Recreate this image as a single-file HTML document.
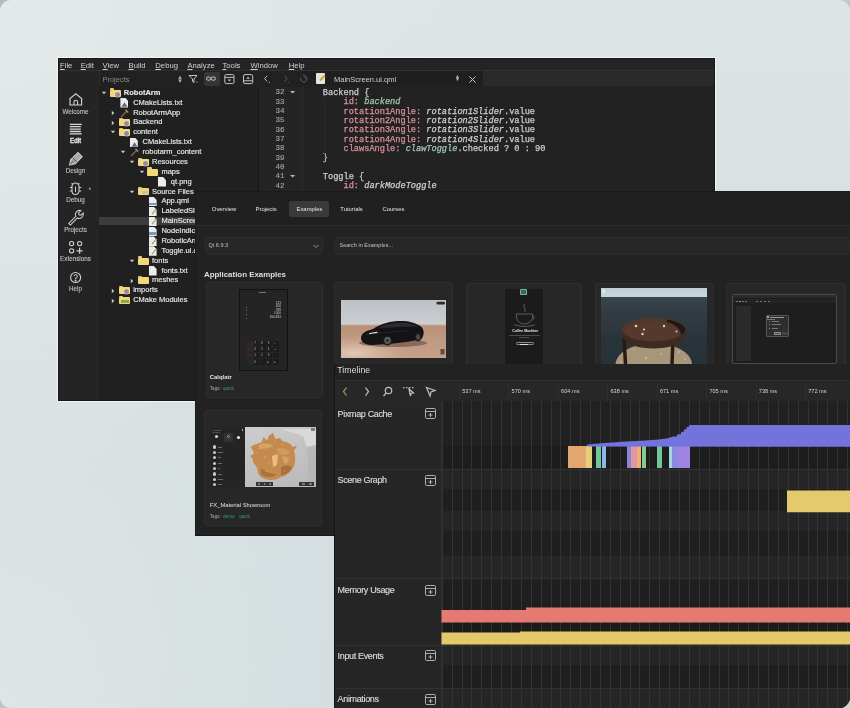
<!DOCTYPE html><html><head><meta charset="utf-8"><style>
*{margin:0;padding:0;box-sizing:border-box}
html,body{width:850px;height:708px;overflow:hidden}
body{position:relative;background:linear-gradient(135deg,#b3bbbb 0%,#bfc6c6 50%,#cdd4d4 100%);font-family:"Liberation Sans",sans-serif}
.abs{position:absolute}
.t{position:absolute;white-space:pre;line-height:1}
#card{filter:blur(0.3px);position:absolute;left:0;top:0;width:850px;height:708px;border-radius:11px;background:radial-gradient(ellipse 60% 70% at 0% 0%,rgba(228,234,234,0.9),rgba(228,234,234,0) 100%),radial-gradient(ellipse 40% 60% at 0% 100%,rgba(226,232,232,0.7),rgba(226,232,232,0) 100%),linear-gradient(180deg,#dce4e5 0%,#d6dfe1 60%,#d4dee0 100%);overflow:hidden}
</style></head><body>
<div id="card">

<div class="abs" style="left:57px;top:57px;width:659px;height:345px;background:#f2f5f5"></div>
<div class="abs" id="w1" style="left:58px;top:58px;width:657px;height:343px;background:#242424;overflow:hidden;border:1px solid #161616">
<div class="t" style="left:1.0px;top:3.0px;font-size:7.7px;color:#d0d0d0"><u style="text-decoration-thickness:0.5px;text-underline-offset:1px">F</u>ile</div>
<div class="t" style="left:21.7px;top:3.0px;font-size:7.7px;color:#d0d0d0"><u style="text-decoration-thickness:0.5px;text-underline-offset:1px">E</u>dit</div>
<div class="t" style="left:43.6px;top:3.0px;font-size:7.7px;color:#d0d0d0"><u style="text-decoration-thickness:0.5px;text-underline-offset:1px">V</u>iew</div>
<div class="t" style="left:69.5px;top:3.0px;font-size:7.7px;color:#d0d0d0"><u style="text-decoration-thickness:0.5px;text-underline-offset:1px">B</u>uild</div>
<div class="t" style="left:96.3px;top:3.0px;font-size:7.7px;color:#d0d0d0"><u style="text-decoration-thickness:0.5px;text-underline-offset:1px">D</u>ebug</div>
<div class="t" style="left:128.4px;top:3.0px;font-size:7.7px;color:#d0d0d0"><u style="text-decoration-thickness:0.5px;text-underline-offset:1px">A</u>nalyze</div>
<div class="t" style="left:163.5px;top:3.0px;font-size:7.7px;color:#d0d0d0"><u style="text-decoration-thickness:0.5px;text-underline-offset:1px">T</u>ools</div>
<div class="t" style="left:191.5px;top:3.0px;font-size:7.7px;color:#d0d0d0"><u style="text-decoration-thickness:0.5px;text-underline-offset:1px">W</u>indow</div>
<div class="t" style="left:229.7px;top:3.0px;font-size:7.7px;color:#d0d0d0"><u style="text-decoration-thickness:0.5px;text-underline-offset:1px">H</u>elp</div>
<div class="abs" style="left:0;top:11.0px;width:657px;height:1px;background:#323232"></div>
<div class="abs" style="left:40px;top:12px;width:616px;height:16px;background:#212121"></div>
<div class="abs" style="left:0;top:12px;width:40px;height:16px;background:#242424"></div>
<div class="abs" style="left:40px;top:27.5px;width:616px;height:1px;background:#333"></div>
<div class="abs" style="left:39.5px;top:12px;width:1px;height:340px;background:#2c2c2c"></div>
<div class="abs" style="left:40px;top:28px;width:159px;height:320px;background:#202020"></div>
<div class="abs" style="left:199px;top:28px;width:44px;height:320px;background:#242424"></div>
<div class="abs" style="left:242.5px;top:28px;width:1px;height:320px;background:#2c2c2c"></div>
<div class="abs" style="left:199px;top:28px;width:1px;height:340px;background:#161616"></div>
<div class="abs" style="left:244px;top:28px;width:412px;height:320px;background:#222222"></div>
<div class="abs" style="left:424px;top:12px;width:232px;height:15px;background:#2a2a2a"></div>
<div class="abs" style="left:244px;top:12px;width:180px;height:15px;background:#1f1f1f"></div>
<div class="t" style="left:43.400000000000006px;top:16.5px;font-size:7.5px;color:#8a8a8a">Projects</div>
<div class="t" style="left:118px;top:15.5px;font-size:6px;color:#aaa;line-height:0.7">&#9650;<br>&#9660;</div>
<div class="abs" style="left:145px;top:13px;width:16px;height:14px;background:#353535;border-radius:2px"></div>
<svg class="abs" style="left:127px;top:12px" width="160" height="16" viewBox="0 0 160 16">
<g fill="none" stroke="#c4c4c4" stroke-width="1">
<path d="M3 4.5 H11 L8 8 V11.5 L6.5 10.5 V8 Z"/><circle cx="11" cy="11" r="0.6" fill="#c4c4c4" stroke="none"/>
<rect x="20.5" y="6" width="4.2" height="3.2" rx="1.6"/><rect x="25.3" y="6" width="4.2" height="3.2" rx="1.6"/>
<rect x="38.8" y="3.6" width="9.2" height="9" rx="1.5"/><path d="M38.8 6.4 H48"/><path d="M41.6 8.6 H45.2 L43.4 10.6 Z" fill="#c4c4c4" stroke="none"/>
<rect x="57.5" y="3.6" width="9.2" height="9" rx="1.5"/><path d="M57.5 9.8 H66.7"/><path d="M60.3 7.8 H63.9 L62.1 5.8 Z" fill="#c4c4c4" stroke="none"/>
<path d="M81.2 4.8 L78.6 7.6 L81.2 10.4"/><circle cx="83.3" cy="11.3" r="0.6" fill="#c4c4c4" stroke="none"/>
</g>
<g fill="none" stroke="#5c5c5c" stroke-width="1"><path d="M98.5 4.8 L101.1 7.6 L98.5 10.4"/><circle cx="102.8" cy="11.3" r="0.6" fill="#5c5c5c" stroke="none"/><path d="M119.5 5.2 A3.2 3.2 0 1 1 115 6.5"/><path d="M117 4 L119.7 5 L118.8 7.6"/></g>
</svg>
<div class="abs" style="left:257px;top:14px;width:9px;height:11px;background:#e8e4da;border-radius:1px"></div>
<div class="abs" style="left:260px;top:18px;width:7px;height:2px;background:#c8a040;transform:rotate(-45deg)"></div>
<div class="t" style="left:275px;top:17.299999999999997px;font-size:7.5px;color:#cfcfcf">MainScreen.ui.qml</div>
<div class="t" style="left:396px;top:15.5px;font-size:5px;color:#bbb;line-height:0.75">&#9650;<br>&#9660;</div>
<svg class="abs" style="left:409px;top:15.5px" width="9" height="9"><path d="M1.5 1.5 L7.5 7.5 M7.5 1.5 L1.5 7.5" stroke="#c8c8c8" stroke-width="1"/></svg>
<div class="t" style="left:-3.5px;width:40px;text-align:center;top:49.5px;font-size:6.3px;color:#c2c2c2;-webkit-text-stroke:0.1px">Welcome</div>
<div class="t" style="left:-3.5px;width:40px;text-align:center;top:79.0px;font-size:6.3px;color:#f0f0f0;-webkit-text-stroke:0.3px">Edit</div>
<div class="t" style="left:-3.5px;width:40px;text-align:center;top:108.8px;font-size:6.3px;color:#c2c2c2;-webkit-text-stroke:0.1px">Design</div>
<div class="t" style="left:-3.5px;width:40px;text-align:center;top:138.2px;font-size:6.3px;color:#c2c2c2;-webkit-text-stroke:0.1px">Debug</div>
<div class="t" style="left:-3.5px;width:40px;text-align:center;top:167.5px;font-size:6.3px;color:#c2c2c2;-webkit-text-stroke:0.1px">Projects</div>
<div class="t" style="left:-3.5px;width:40px;text-align:center;top:197.2px;font-size:6.3px;color:#c2c2c2;-webkit-text-stroke:0.1px">Extensions</div>
<div class="t" style="left:-3.5px;width:40px;text-align:center;top:226.8px;font-size:6.3px;color:#c2c2c2;-webkit-text-stroke:0.1px">Help</div>
<svg class="abs" style="left:0;top:0" width="40" height="300" viewBox="59 59 40 300"><g fill="none" stroke="#cfcfcf" stroke-width="1.1"><path d="M70 105 V98.5 L75.8 93.8 L81.6 98.5 V105 Z" stroke-width="1.2"/><path d="M74 105 V102 A1.8 1.8 0 0 1 77.6 102 V105" stroke-width="1.1"/><path d="M69.8 124.3 H81.8" stroke-width="1.3" stroke="#d8d8d8"/><path d="M69.8 126.7 H80.8" stroke-width="1.3" stroke="#d8d8d8"/><path d="M69.8 129.1 H80.8" stroke-width="1.3" stroke="#d8d8d8"/><path d="M69.8 131.5 H80.8" stroke-width="1.3" stroke="#d8d8d8"/><path d="M69.8 133.9 H81.8" stroke-width="1.3" stroke="#d8d8d8"/><path d="M69.5 165 L70.8 159.5 L78 152.5 L82.2 156.7 L75.2 163.7 Z" fill="#a8a8a8" stroke="#c8c8c8"/><path d="M70 164.5 L74 160.5 M72.5 157.5 L77.5 162.5" stroke="#444" stroke-width="0.8"/><path d="M72 186 A3.5 3 0 0 1 79 186 V191 A3.5 3.5 0 0 1 72 191 Z" stroke-width="1.1"/><path d="M73 184.5 L71.5 183 M78 184.5 L79.5 183 M69.8 187.5 H72 M79 187.5 H81.2 M69.8 191 H72 M79 191 H81.2 M75.5 186.5 V192" stroke-width="1"/><path d="M89.2 187.2 L91.2 188.7 L89.2 190.2 Z" fill="#b0b0b0" stroke="none"/><path d="M69.7 224.3 L68.8 223.4 L75.8 216.4 A4.2 4.2 0 0 1 80.8 210.6 L78.6 212.8 L79 214.8 L81 215.2 L83.2 213 A4.2 4.2 0 0 1 77.4 218 L70.4 225 Z" stroke-width="1.05"/><circle cx="71.6" cy="243.6" r="2.1"/><circle cx="79.6" cy="243.6" r="2.1"/><circle cx="71.6" cy="250.8" r="2.1"/><path d="M79.6 247.8 V253.8 M76.6 250.8 H82.6" stroke-width="1.2"/><circle cx="75.6" cy="277.5" r="5"/><path d="M74 276.2 A1.7 1.7 0 1 1 75.6 278 V279" stroke-width="1"/><circle cx="75.6" cy="280.6" r="0.5" fill="#cfcfcf"/></g></svg>
<div class="abs" style="left:40px;top:157.6px;width:97px;height:8.2px;background:#3c3c3c"></div>
<svg class="abs" style="left:42.0px;top:31.8px" width="6" height="4"><path d="M0.8 0.8 H5.2 L3 3.3 Z" fill="#c8c8c8"/></svg>
<div class="abs" style="left:50.5px;top:30.6px;width:11px;height:7px;background:#f2d67a;border-radius:1px"></div>
<div class="abs" style="left:50.5px;top:29.3px;width:4.5px;height:1.6px;background:#e6c66a;border-radius:1px 1px 0 0"></div>
<div class="abs" style="left:55.5px;top:32.6px;width:5px;height:5px;background:#9a8aa0;border-radius:50%;box-shadow:0 0 0 0.6px #fff8"></div>
<div class="t" style="left:64.8px;top:29.7px;font-size:7.5px;font-weight:bold;color:#e8e8e8;-webkit-text-stroke:0.15px">RobotArm</div>
<div class="abs" style="left:61.4px;top:39.1px;width:8px;height:9.5px;background:#ececec;clip-path:polygon(0 0,65% 0,100% 32%,100% 100%,0 100%)"></div>
<svg class="abs" style="left:62.400000000000006px;top:43.2px" width="7" height="5"><path d="M0.5 4.8 L3.5 0.3 L6.5 4.8 Z" fill="#6a6a7a"/></svg>
<div class="t" style="left:74.2px;top:39.6px;font-size:7.5px;font-weight:normal;color:#e8e8e8;-webkit-text-stroke:0.15px">CMakeLists.txt</div>
<svg class="abs" style="left:52.400000000000006px;top:51.1px" width="4" height="6"><path d="M0.8 0.8 V5.2 L3.3 3 Z" fill="#c8c8c8"/></svg>
<svg class="abs" style="left:61.400000000000006px;top:48.6px" width="10" height="10"><path d="M1 9 L7 3" stroke="#8a6a58" stroke-width="1.1"/><path d="M5.5 1.8 L8.2 4.5" stroke="#b08a70" stroke-width="1.4"/></svg>
<div class="t" style="left:74.2px;top:49.5px;font-size:7.5px;font-weight:normal;color:#e8e8e8;-webkit-text-stroke:0.15px">RobotArmApp</div>
<svg class="abs" style="left:52.400000000000006px;top:60.9px" width="4" height="6"><path d="M0.8 0.8 V5.2 L3.3 3 Z" fill="#c8c8c8"/></svg>
<div class="abs" style="left:59.9px;top:60.2px;width:11px;height:7px;background:#f2d67a;border-radius:1px"></div>
<div class="abs" style="left:59.9px;top:58.9px;width:4.5px;height:1.6px;background:#e6c66a;border-radius:1px 1px 0 0"></div>
<div class="abs" style="left:64.9px;top:62.2px;width:5px;height:5px;background:#9a8aa0;border-radius:50%;box-shadow:0 0 0 0.6px #fff8"></div>
<div class="t" style="left:74.2px;top:59.3px;font-size:7.5px;font-weight:normal;color:#e8e8e8;-webkit-text-stroke:0.15px">Backend</div>
<svg class="abs" style="left:51.400000000000006px;top:71.3px" width="6" height="4"><path d="M0.8 0.8 H5.2 L3 3.3 Z" fill="#c8c8c8"/></svg>
<div class="abs" style="left:59.9px;top:70.1px;width:11px;height:7px;background:#f2d67a;border-radius:1px"></div>
<div class="abs" style="left:59.9px;top:68.8px;width:4.5px;height:1.6px;background:#e6c66a;border-radius:1px 1px 0 0"></div>
<div class="abs" style="left:64.9px;top:72.1px;width:5px;height:5px;background:#9a8aa0;border-radius:50%;box-shadow:0 0 0 0.6px #fff8"></div>
<div class="t" style="left:74.2px;top:69.2px;font-size:7.5px;font-weight:normal;color:#e8e8e8;-webkit-text-stroke:0.15px">content</div>
<div class="abs" style="left:70.8px;top:78.6px;width:8px;height:9.5px;background:#ececec;clip-path:polygon(0 0,65% 0,100% 32%,100% 100%,0 100%)"></div>
<svg class="abs" style="left:71.80000000000001px;top:82.7px" width="7" height="5"><path d="M0.5 4.8 L3.5 0.3 L6.5 4.8 Z" fill="#6a6a7a"/></svg>
<div class="t" style="left:83.6px;top:79.1px;font-size:7.5px;font-weight:normal;color:#e8e8e8;-webkit-text-stroke:0.15px">CMakeLists.txt</div>
<svg class="abs" style="left:60.80000000000001px;top:91.1px" width="6" height="4"><path d="M0.8 0.8 H5.2 L3 3.3 Z" fill="#c8c8c8"/></svg>
<svg class="abs" style="left:70.80000000000001px;top:88.1px" width="10" height="10"><path d="M1 9 L7 3" stroke="#8a6a58" stroke-width="1.1"/><path d="M5.5 1.8 L8.2 4.5" stroke="#b08a70" stroke-width="1.4"/></svg>
<div class="t" style="left:83.6px;top:89.0px;font-size:7.5px;font-weight:normal;color:#e8e8e8;-webkit-text-stroke:0.15px">robotarm_content</div>
<svg class="abs" style="left:70.19999999999999px;top:101.0px" width="6" height="4"><path d="M0.8 0.8 H5.2 L3 3.3 Z" fill="#c8c8c8"/></svg>
<div class="abs" style="left:78.7px;top:99.8px;width:11px;height:7px;background:#f2d67a;border-radius:1px"></div>
<div class="abs" style="left:78.7px;top:98.5px;width:4.5px;height:1.6px;background:#e6c66a;border-radius:1px 1px 0 0"></div>
<div class="abs" style="left:83.69999999999999px;top:101.8px;width:5px;height:5px;background:#9a8aa0;border-radius:50%;box-shadow:0 0 0 0.6px #fff8"></div>
<div class="t" style="left:93.0px;top:98.9px;font-size:7.5px;font-weight:normal;color:#e8e8e8;-webkit-text-stroke:0.15px">Resources</div>
<svg class="abs" style="left:79.6px;top:110.8px" width="6" height="4"><path d="M0.8 0.8 H5.2 L3 3.3 Z" fill="#c8c8c8"/></svg>
<div class="abs" style="left:88.1px;top:109.6px;width:11px;height:7px;background:#f2d67a;border-radius:1px"></div>
<div class="abs" style="left:88.1px;top:108.3px;width:4.5px;height:1.6px;background:#e6c66a;border-radius:1px 1px 0 0"></div>
<div class="t" style="left:102.4px;top:108.7px;font-size:7.5px;font-weight:normal;color:#e8e8e8;-webkit-text-stroke:0.15px">maps</div>
<div class="abs" style="left:99.0px;top:118.1px;width:8px;height:9.5px;background:#ececec;clip-path:polygon(0 0,65% 0,100% 32%,100% 100%,0 100%)"></div>
<div class="t" style="left:111.8px;top:118.6px;font-size:7.5px;font-weight:normal;color:#e8e8e8;-webkit-text-stroke:0.15px">qt.png</div>
<svg class="abs" style="left:70.19999999999999px;top:130.6px" width="6" height="4"><path d="M0.8 0.8 H5.2 L3 3.3 Z" fill="#c8c8c8"/></svg>
<div class="abs" style="left:78.7px;top:129.4px;width:11px;height:7px;background:#f2d67a;border-radius:1px"></div>
<div class="abs" style="left:78.7px;top:128.1px;width:4.5px;height:1.6px;background:#e6c66a;border-radius:1px 1px 0 0"></div>
<div class="abs" style="left:82.69999999999999px;top:132.1px;width:6px;height:3px;background:#c8c0a8"></div>
<div class="t" style="left:93.0px;top:128.5px;font-size:7.5px;font-weight:normal;color:#e8e8e8;-webkit-text-stroke:0.15px">Source Files</div>
<div class="abs" style="left:89.6px;top:137.9px;width:8px;height:9.5px;background:#ececec;clip-path:polygon(0 0,65% 0,100% 32%,100% 100%,0 100%)"></div>
<div class="abs" style="left:90.1px;top:143.5px;width:7px;height:2.5px;background:#7a9ab8"></div>
<div class="t" style="left:102.4px;top:138.4px;font-size:7.5px;font-weight:normal;color:#e8e8e8;-webkit-text-stroke:0.15px">App.qml</div>
<div class="abs" style="left:89.6px;top:147.8px;width:8px;height:9.5px;background:#ececec;clip-path:polygon(0 0,65% 0,100% 32%,100% 100%,0 100%)"></div>
<div class="abs" style="left:91.6px;top:152.4px;width:6.5px;height:1.4px;background:#a89050;transform:rotate(-50deg)"></div>
<div class="t" style="left:102.4px;top:148.3px;font-size:7.5px;font-weight:normal;color:#e8e8e8;-webkit-text-stroke:0.15px">LabeledSlider.qml</div>
<div class="abs" style="left:89.6px;top:157.6px;width:8px;height:9.5px;background:#ececec;clip-path:polygon(0 0,65% 0,100% 32%,100% 100%,0 100%)"></div>
<div class="abs" style="left:91.6px;top:162.2px;width:6.5px;height:1.4px;background:#a89050;transform:rotate(-50deg)"></div>
<div class="t" style="left:102.4px;top:158.1px;font-size:7.5px;font-weight:normal;color:#e8e8e8;-webkit-text-stroke:0.15px">MainScreen.ui.qml</div>
<div class="abs" style="left:89.6px;top:167.5px;width:8px;height:9.5px;background:#ececec;clip-path:polygon(0 0,65% 0,100% 32%,100% 100%,0 100%)"></div>
<div class="abs" style="left:90.1px;top:173.1px;width:7px;height:2.5px;background:#7a9ab8"></div>
<div class="t" style="left:102.4px;top:168.0px;font-size:7.5px;font-weight:normal;color:#e8e8e8;-webkit-text-stroke:0.15px">NodeIndicator.qml</div>
<div class="abs" style="left:89.6px;top:177.4px;width:8px;height:9.5px;background:#ececec;clip-path:polygon(0 0,65% 0,100% 32%,100% 100%,0 100%)"></div>
<div class="abs" style="left:91.6px;top:182.0px;width:6.5px;height:1.4px;background:#a89050;transform:rotate(-50deg)"></div>
<div class="t" style="left:102.4px;top:177.9px;font-size:7.5px;font-weight:normal;color:#e8e8e8;-webkit-text-stroke:0.15px">RoboticArm.qml</div>
<div class="abs" style="left:89.6px;top:187.3px;width:8px;height:9.5px;background:#ececec;clip-path:polygon(0 0,65% 0,100% 32%,100% 100%,0 100%)"></div>
<div class="abs" style="left:91.6px;top:191.9px;width:6.5px;height:1.4px;background:#a89050;transform:rotate(-50deg)"></div>
<div class="t" style="left:102.4px;top:187.8px;font-size:7.5px;font-weight:normal;color:#e8e8e8;-webkit-text-stroke:0.15px">Toggle.ui.qml</div>
<svg class="abs" style="left:70.19999999999999px;top:199.8px" width="6" height="4"><path d="M0.8 0.8 H5.2 L3 3.3 Z" fill="#c8c8c8"/></svg>
<div class="abs" style="left:78.7px;top:198.6px;width:11px;height:7px;background:#f2d67a;border-radius:1px"></div>
<div class="abs" style="left:78.7px;top:197.3px;width:4.5px;height:1.6px;background:#e6c66a;border-radius:1px 1px 0 0"></div>
<div class="t" style="left:93.0px;top:197.7px;font-size:7.5px;font-weight:normal;color:#e8e8e8;-webkit-text-stroke:0.15px">fonts</div>
<div class="abs" style="left:89.6px;top:207.0px;width:8px;height:9.5px;background:#ececec;clip-path:polygon(0 0,65% 0,100% 32%,100% 100%,0 100%)"></div>
<div class="t" style="left:102.4px;top:207.5px;font-size:7.5px;font-weight:normal;color:#e8e8e8;-webkit-text-stroke:0.15px">fonts.txt</div>
<svg class="abs" style="left:71.19999999999999px;top:219.0px" width="4" height="6"><path d="M0.8 0.8 V5.2 L3.3 3 Z" fill="#c8c8c8"/></svg>
<div class="abs" style="left:78.7px;top:218.3px;width:11px;height:7px;background:#f2d67a;border-radius:1px"></div>
<div class="abs" style="left:78.7px;top:217.0px;width:4.5px;height:1.6px;background:#e6c66a;border-radius:1px 1px 0 0"></div>
<div class="t" style="left:93.0px;top:217.4px;font-size:7.5px;font-weight:normal;color:#e8e8e8;-webkit-text-stroke:0.15px">meshes</div>
<svg class="abs" style="left:52.400000000000006px;top:228.9px" width="4" height="6"><path d="M0.8 0.8 V5.2 L3.3 3 Z" fill="#c8c8c8"/></svg>
<div class="abs" style="left:59.9px;top:228.2px;width:11px;height:7px;background:#f2d67a;border-radius:1px"></div>
<div class="abs" style="left:59.9px;top:226.9px;width:4.5px;height:1.6px;background:#e6c66a;border-radius:1px 1px 0 0"></div>
<div class="abs" style="left:64.9px;top:230.2px;width:5px;height:5px;background:#9a8aa0;border-radius:50%;box-shadow:0 0 0 0.6px #fff8"></div>
<div class="t" style="left:74.2px;top:227.3px;font-size:7.5px;font-weight:normal;color:#e8e8e8;-webkit-text-stroke:0.15px">imports</div>
<svg class="abs" style="left:52.400000000000006px;top:238.8px" width="4" height="6"><path d="M0.8 0.8 V5.2 L3.3 3 Z" fill="#c8c8c8"/></svg>
<div class="abs" style="left:59.9px;top:238.1px;width:11px;height:7px;background:#f2d67a;border-radius:1px"></div>
<div class="abs" style="left:59.9px;top:236.8px;width:4.5px;height:1.6px;background:#e6c66a;border-radius:1px 1px 0 0"></div>
<div class="abs" style="left:62.400000000000006px;top:240.8px;width:8px;height:3.5px;background:#8aa850"></div>
<div class="t" style="left:74.2px;top:237.2px;font-size:7.5px;font-weight:normal;color:#e8e8e8;-webkit-text-stroke:0.15px">CMake Modules</div>
<div class="t" style="left:201.5px;width:24px;text-align:right;top:30.1px;font-family:Liberation Mono;font-size:7.6px;color:#a2a2a2;-webkit-text-stroke:0.15px">32</div>
<svg class="abs" style="left:231.2px;top:31.8px" width="6" height="4"><path d="M0 0 H5.2 L2.6 2.4 Z" fill="#b8b8b8"/></svg>
<div class="t" style="left:201.5px;width:24px;text-align:right;top:39.5px;font-family:Liberation Mono;font-size:7.6px;color:#a2a2a2;-webkit-text-stroke:0.15px">33</div>
<div class="t" style="left:201.5px;width:24px;text-align:right;top:48.8px;font-family:Liberation Mono;font-size:7.6px;color:#a2a2a2;-webkit-text-stroke:0.15px">34</div>
<div class="t" style="left:201.5px;width:24px;text-align:right;top:58.2px;font-family:Liberation Mono;font-size:7.6px;color:#a2a2a2;-webkit-text-stroke:0.15px">35</div>
<div class="t" style="left:201.5px;width:24px;text-align:right;top:67.5px;font-family:Liberation Mono;font-size:7.6px;color:#a2a2a2;-webkit-text-stroke:0.15px">36</div>
<div class="t" style="left:201.5px;width:24px;text-align:right;top:76.9px;font-family:Liberation Mono;font-size:7.6px;color:#a2a2a2;-webkit-text-stroke:0.15px">37</div>
<div class="t" style="left:201.5px;width:24px;text-align:right;top:86.3px;font-family:Liberation Mono;font-size:7.6px;color:#a2a2a2;-webkit-text-stroke:0.15px">38</div>
<div class="t" style="left:201.5px;width:24px;text-align:right;top:95.6px;font-family:Liberation Mono;font-size:7.6px;color:#a2a2a2;-webkit-text-stroke:0.15px">39</div>
<div class="t" style="left:201.5px;width:24px;text-align:right;top:105.0px;font-family:Liberation Mono;font-size:7.6px;color:#a2a2a2;-webkit-text-stroke:0.15px">40</div>
<div class="t" style="left:201.5px;width:24px;text-align:right;top:114.3px;font-family:Liberation Mono;font-size:7.6px;color:#a2a2a2;-webkit-text-stroke:0.15px">41</div>
<svg class="abs" style="left:231.2px;top:116.0px" width="6" height="4"><path d="M0 0 H5.2 L2.6 2.4 Z" fill="#b8b8b8"/></svg>
<div class="t" style="left:201.5px;width:24px;text-align:right;top:123.7px;font-family:Liberation Mono;font-size:7.6px;color:#a2a2a2;-webkit-text-stroke:0.15px">42</div>
<div class="t" style="left:263.8px;top:30.1px;font-family:Liberation Mono;font-size:8.65px;-webkit-text-stroke:0.25px"><span style="color:#cdcdcd;">Backend {</span></div>
<div class="t" style="left:263.8px;top:39.4px;font-family:Liberation Mono;font-size:8.65px;-webkit-text-stroke:0.25px"><span style="color:#cdcdcd;">    </span><span style="color:#d98f9a;">id: </span><span style="color:#a3c6b2;font-style:italic">backend</span></div>
<div class="t" style="left:263.8px;top:48.8px;font-family:Liberation Mono;font-size:8.65px;-webkit-text-stroke:0.25px"><span style="color:#cdcdcd;">    </span><span style="color:#d98f9a;">rotation1Angle: </span><span style="color:#d0d0d0;font-style:italic">rotation1Slider</span><span style="color:#cdcdcd;">.value</span></div>
<div class="t" style="left:263.8px;top:58.1px;font-family:Liberation Mono;font-size:8.65px;-webkit-text-stroke:0.25px"><span style="color:#cdcdcd;">    </span><span style="color:#d98f9a;">rotation2Angle: </span><span style="color:#d0d0d0;font-style:italic">rotation2Slider</span><span style="color:#cdcdcd;">.value</span></div>
<div class="t" style="left:263.8px;top:67.4px;font-family:Liberation Mono;font-size:8.65px;-webkit-text-stroke:0.25px"><span style="color:#cdcdcd;">    </span><span style="color:#d98f9a;">rotation3Angle: </span><span style="color:#d0d0d0;font-style:italic">rotation3Slider</span><span style="color:#cdcdcd;">.value</span></div>
<div class="t" style="left:263.8px;top:76.8px;font-family:Liberation Mono;font-size:8.65px;-webkit-text-stroke:0.25px"><span style="color:#cdcdcd;">    </span><span style="color:#d98f9a;">rotation4Angle: </span><span style="color:#d0d0d0;font-style:italic">rotation4Slider</span><span style="color:#cdcdcd;">.value</span></div>
<div class="t" style="left:263.8px;top:86.1px;font-family:Liberation Mono;font-size:8.65px;-webkit-text-stroke:0.25px"><span style="color:#cdcdcd;">    </span><span style="color:#d98f9a;">clawsAngle: </span><span style="color:#a3c6b2;font-style:italic">clawToggle</span><span style="color:#cdcdcd;">.checked ? 0 : 90</span></div>
<div class="t" style="left:263.8px;top:95.4px;font-family:Liberation Mono;font-size:8.65px;-webkit-text-stroke:0.25px"><span style="color:#cdcdcd;">}</span></div>
<div class="t" style="left:263.8px;top:104.7px;font-family:Liberation Mono;font-size:8.65px;-webkit-text-stroke:0.25px"><span style="color:#cdcdcd;"></span></div>
<div class="t" style="left:263.8px;top:114.1px;font-family:Liberation Mono;font-size:8.65px;-webkit-text-stroke:0.25px"><span style="color:#cdcdcd;">Toggle {</span></div>
<div class="t" style="left:263.8px;top:123.4px;font-family:Liberation Mono;font-size:8.65px;-webkit-text-stroke:0.25px"><span style="color:#cdcdcd;">    </span><span style="color:#d98f9a;">id: </span><span style="color:#d0d0d0;font-style:italic">darkModeToggle</span></div>
<div class="abs" style="left:264.5px;top:38px;width:1px;height:58px;background:#2c2c2c"></div>
</div>
<div class="abs" id="w2" style="left:196px;top:192px;width:654px;height:343px;background:#222222;overflow:hidden;box-shadow:-1px 0 0 #1a1c1c, 0 1px 0 #181818, -1px 1px 0 #181818, 0 -1px 0 #1a1a1a">
<div class="abs" style="left:0;top:0;width:655px;height:32.5px;background:#202020"></div>
<div class="abs" style="left:0;top:32.5px;width:655px;height:1px;background:#2f2f2f"></div>
<div class="abs" style="left:93px;top:9px;width:40px;height:16px;background:#3a3a3a;border-radius:2px"></div>
<div class="t" style="left:15.800000000000011px;top:15px;font-size:5.9px;color:#e4e4e4">Overview</div>
<div class="t" style="left:59.5px;top:15px;font-size:5.9px;color:#e4e4e4">Projects</div>
<div class="t" style="left:100.5px;top:15px;font-size:5.9px;color:#e4e4e4">Examples</div>
<div class="t" style="left:144.3px;top:15px;font-size:5.9px;color:#e4e4e4">Tutorials</div>
<div class="t" style="left:186.5px;top:15px;font-size:5.9px;color:#e4e4e4">Courses</div>
<div class="abs" style="left:9px;top:45px;width:118px;height:18px;background:#272727;border:1px solid #2b2b2b;border-radius:3px"></div>
<div class="t" style="left:12.5px;top:51.30000000000001px;font-size:5.5px;color:#c4c4c4">Qt 6.9.3</div>
<svg class="abs" style="left:116.5px;top:52px" width="6" height="5"><path d="M0.5 1 L3 3.5 L5.5 1" fill="none" stroke="#b0b0b0" stroke-width="0.8"/></svg>
<div class="abs" style="left:138px;top:45px;width:516px;height:18px;background:#272727;border:1px solid #2b2b2b;border-radius:3px"></div>
<div class="t" style="left:143.5px;top:51.30000000000001px;font-size:5.5px;color:#c4c4c4">Search in Examples...</div>
<div class="t" style="left:8px;top:79px;font-size:7.9px;font-weight:bold;color:#dedede">Application Examples</div>
<div class="abs" style="left:10px;top:89.5px;width:117.0px;height:116.8px;background:#272727;border:1px solid #2f2f2f;border-radius:3px"></div>
<div class="abs" style="left:137.5px;top:90px;width:119.5px;height:98.0px;background:#272727;border:1px solid #2f2f2f;border-radius:3px"></div>
<div class="abs" style="left:269.6px;top:91px;width:116.4px;height:97.0px;background:#272727;border:1px solid #2f2f2f;border-radius:3px"></div>
<div class="abs" style="left:398.6px;top:91px;width:119.4px;height:97.0px;background:#272727;border:1px solid #2f2f2f;border-radius:3px"></div>
<div class="abs" style="left:529.5px;top:91px;width:120.0px;height:97.0px;background:#272727;border:1px solid #2f2f2f;border-radius:3px"></div>
<div class="abs" style="left:8px;top:217.7px;width:118.0px;height:116.3px;background:#272727;border:1px solid #2f2f2f;border-radius:3px"></div>
<div class="abs" style="left:42.599999999999994px;top:97px;width:49px;height:81.5px;background:#242424;border:1.5px solid #121212"></div>
<div class="abs" style="left:63px;top:100px;width:7px;height:1px;background:#777"></div>
<div class="t" style="left:59px;width:26px;text-align:right;top:109.5px;font-size:3.1px;line-height:3.65px;color:#d0d0d0">123<br>456<br>789<br>1000<br>456,833</div>
<div class="abs" style="left:49.5px;top:114.5px;width:1px;height:1px;background:#777"></div>
<div class="abs" style="left:49.5px;top:118.2px;width:1px;height:1px;background:#777"></div>
<div class="abs" style="left:49.5px;top:121.9px;width:1px;height:1px;background:#777"></div>
<div class="abs" style="left:49.5px;top:125.6px;width:1px;height:1px;background:#777"></div>
<div class="abs" style="left:51.0px;top:148.5px;width:5.6px;height:5.2px;background:#32262a;border-radius:0.5px"></div>
<div class="abs" style="left:57.6px;top:148.5px;width:5.6px;height:5.2px;background:#1c1c1c;border-radius:0.5px"></div>
<div class="abs" style="left:64.2px;top:148.5px;width:5.6px;height:5.2px;background:#1c1c1c;border-radius:0.5px"></div>
<div class="abs" style="left:70.8px;top:148.5px;width:5.6px;height:5.2px;background:#1c1c1c;border-radius:0.5px"></div>
<div class="abs" style="left:77.4px;top:148.5px;width:5.6px;height:5.2px;background:#1c1c1c;border-radius:0.5px"></div>
<div class="abs" style="left:51.0px;top:154.8px;width:5.6px;height:5.2px;background:#32262a;border-radius:0.5px"></div>
<div class="abs" style="left:57.6px;top:154.8px;width:5.6px;height:5.2px;background:#1c1c1c;border-radius:0.5px"></div>
<div class="abs" style="left:64.2px;top:154.8px;width:5.6px;height:5.2px;background:#1c1c1c;border-radius:0.5px"></div>
<div class="abs" style="left:70.8px;top:154.8px;width:5.6px;height:5.2px;background:#1c1c1c;border-radius:0.5px"></div>
<div class="abs" style="left:77.4px;top:154.8px;width:5.6px;height:5.2px;background:#1c1c1c;border-radius:0.5px"></div>
<div class="abs" style="left:51.0px;top:161.1px;width:5.6px;height:5.2px;background:#32262a;border-radius:0.5px"></div>
<div class="abs" style="left:57.6px;top:161.1px;width:5.6px;height:5.2px;background:#1c1c1c;border-radius:0.5px"></div>
<div class="abs" style="left:64.2px;top:161.1px;width:5.6px;height:5.2px;background:#1c1c1c;border-radius:0.5px"></div>
<div class="abs" style="left:70.8px;top:161.1px;width:5.6px;height:5.2px;background:#1c1c1c;border-radius:0.5px"></div>
<div class="abs" style="left:77.4px;top:161.1px;width:5.6px;height:5.2px;background:#1c1c1c;border-radius:0.5px"></div>
<div class="abs" style="left:51.0px;top:167.4px;width:5.6px;height:5.2px;background:#222a28;border-radius:0.5px"></div>
<div class="abs" style="left:57.6px;top:167.4px;width:5.6px;height:5.2px;background:#1c1c1c;border-radius:0.5px"></div>
<div class="abs" style="left:64.2px;top:167.4px;width:5.6px;height:5.2px;background:#1c1c1c;border-radius:0.5px"></div>
<div class="abs" style="left:70.8px;top:167.4px;width:5.6px;height:5.2px;background:#1c1c1c;border-radius:0.5px"></div>
<div class="abs" style="left:77.4px;top:167.4px;width:5.6px;height:5.2px;background:#1c1c1c;border-radius:0.5px"></div>
<div class="t" style="left:58.30000000000001px;top:149.8px;font-size:3px;letter-spacing:2.12px;color:#bdbdbd">7 8 9 -</div>
<div class="t" style="left:58.30000000000001px;top:156.1px;font-size:3px;letter-spacing:2.12px;color:#bdbdbd">4 5 6 +</div>
<div class="t" style="left:58.30000000000001px;top:162.4px;font-size:3px;letter-spacing:2.12px;color:#bdbdbd">1 2 3 </div>
<div class="t" style="left:58.30000000000001px;top:168.7px;font-size:3px;letter-spacing:2.12px;color:#bdbdbd">0 . = =</div>
<div class="t" style="left:13.800000000000011px;top:183.2px;font-size:5.9px;font-weight:bold;color:#e4e4e4">Calqlatr</div>
<div class="t" style="left:13.800000000000011px;top:195.3px;font-size:4.6px;color:#a8a8a8">Tags: <span style="color:#4a9a70;background:#1f2a24;padding:0 1px">quick</span></div>
<div class="abs" style="left:144.8px;top:108.39999999999998px;width:105.5px;height:57.5px;overflow:hidden;background:linear-gradient(180deg,#bcc2c7 0%,#c8cccf 36%,#cfd0d0 41%,#b98f78 45%,#bf9880 62%,#c6a089 100%)">
<svg width="106" height="58" viewBox="0 0 106 58" style="position:absolute;left:0;top:0">
<defs><radialGradient id="sand" cx="0.12" cy="0.85" r="0.5"><stop offset="0" stop-color="#e2cbb8"/><stop offset="1" stop-color="#d8b8a0" stop-opacity="0"/></radialGradient></defs>
<rect x="0" y="25" width="106" height="33" fill="url(#sand)"/>
<ellipse cx="52" cy="43" rx="34" ry="4" fill="#5a4038" opacity="0.55"/>
<path d="M20 38 C20 33.5 25 30.5 32 29 C40 23.5 50 21 60 21 C68 21 75 23 80 26.5 C83.5 29.5 83.5 35 80.5 39 C70 42 50 44 32 45 C24.5 45 20 42.5 20 38 Z" fill="#141416"/>
<path d="M37 28 C45 24 54 22.5 62 22.8 C70 23.2 74 25 77 27 C70 26.5 60 26.5 50 27.5 Z" fill="#2c2c30"/>
<path d="M24 35 C34 33 50 32 66 31" stroke="#2a2a2e" stroke-width="0.8" fill="none"/>
<ellipse cx="46.5" cy="40.5" rx="5" ry="5" fill="#1c1c1c"/><ellipse cx="46.5" cy="40.5" rx="3.2" ry="3.4" fill="#5e5e5e"/><ellipse cx="46.5" cy="40.5" rx="1.4" ry="1.5" fill="#2a2a2a"/>
<ellipse cx="77" cy="37" rx="3.2" ry="4.4" fill="#1c1c1c"/><ellipse cx="77" cy="37" rx="2" ry="2.8" fill="#4a4a4a"/>
<path d="M28.5 33.5 L36 32.3" stroke="#dcdcdc" stroke-width="1.2" stroke-linecap="round"/>
<rect x="95.5" y="1.8" width="8.5" height="2.6" rx="1.2" fill="#2a2a2a"/><rect x="99.5" y="49" width="4" height="5.5" fill="#5e5036"/>
</svg></div>
<div class="abs" style="left:309.3px;top:97.19999999999999px;width:38.2px;height:76px;background:#1b1b1b"></div>
<div class="abs" style="left:323.9px;top:97.39999999999998px;width:7.4px;height:5.8px;background:#2f6e55;border-radius:1.5px;box-shadow:inset 0 0 0 0.8px #8fc8b0"></div>
<svg class="abs" style="left:314px;top:110px" width="30" height="30" viewBox="0 0 30 30"><g fill="none" stroke="#5e5e5e" stroke-width="1"><path d="M6.5 12 H22.5 V15 A8 7 0 0 1 6.5 15 Z"/><path d="M22.5 13 A2.8 2.8 0 0 1 22.5 18"/><path d="M4 22.5 C8 25 21 25 25 22.5"/><path d="M14.5 2 C12 5 17 7 14.5 10"/></g></svg>
<div class="t" style="left:316.29999999999995px;top:137.8px;font-size:3.5px;font-weight:bold;color:#e6e6e6">Coffee Machine</div>
<div class="abs" style="left:312.5px;top:143.2px;width:31px;height:0.8px;background:#4a4a4a"></div>
<div class="abs" style="left:323px;top:145.3px;width:10px;height:0.8px;background:#4a4a4a"></div>
<div class="abs" style="left:319.5px;top:149.8px;width:18px;height:3.6px;border:0.6px solid #8a8a8a;border-radius:1.2px"><div style="position:absolute;left:3.5px;top:0.9px;width:8px;height:1.1px;background:#d8d8d8"></div></div>
<div class="abs" style="left:405.29999999999995px;top:96.10000000000002px;width:105.5px;height:76px;overflow:hidden;background:linear-gradient(180deg,#c0ced4 0%,#c9d5d9 11.5%,#3a464e 12.5%,#313c44 30%,#29343a 70%,#27313a 100%)">
<svg width="106" height="76" viewBox="0 0 106 76" style="position:absolute;left:0;top:0">
<path d="M14.5 76 C15.5 64 32 55.5 52.7 55.5 C74 55.5 90 64 91 76 Z" fill="#a8967a"/>
<g fill="#cdbb98" opacity="0.8"><circle cx="24" cy="68" r="1"/><circle cx="33" cy="62" r="0.8"/><circle cx="45" cy="70" r="1.2"/><circle cx="60" cy="66" r="0.9"/><circle cx="78" cy="64" r="1"/><circle cx="84" cy="71" r="1.1"/><circle cx="70" cy="73" r="0.8"/><circle cx="20" cy="74" r="0.9"/></g>
<path d="M23 50 L24.5 76 M72 50 L71 76" stroke="#2a1a12" stroke-width="3.5"/>
<path d="M20.5 41.5 L21.5 49 C25 57 38 60.5 52.5 60.5 C67 60.5 80 57 83.5 49 L84.5 41.5 Z" fill="#3e2a20"/>
<ellipse cx="52.5" cy="41.5" rx="32" ry="12" fill="#4e372b"/>
<ellipse cx="52" cy="43" rx="28.5" ry="9.5" fill="#54392c"/>
<path d="M66 31.5 C76 33 84 37 84.5 41.5 C84 44 82 46 80 47 C80 41 74 36 66 34 Z" fill="#241610"/>
<g fill="#d8d4cc"><circle cx="35" cy="38" r="1.3"/><circle cx="43" cy="41.5" r="1.1"/><circle cx="41.5" cy="46" r="1.2"/><circle cx="63" cy="38" r="1.2"/><circle cx="75.5" cy="43.5" r="1"/></g>
<rect x="1" y="1" width="3" height="4" fill="#e8eef0" opacity="0.7"/>
</svg></div>
<div class="abs" style="left:536.2px;top:102.30000000000001px;width:105px;height:69.5px;background:#1e1e1e;border:1px solid #4a4a4a;border-radius:2px"></div>
<div class="abs" style="left:537.2px;top:103.30000000000001px;width:103px;height:3px;background:#2a2a2a"></div>
<div class="abs" style="left:537.2px;top:107px;width:103px;height:4px;background:#232323"></div>
<div class="abs" style="left:540px;top:108.5px;width:1.5px;height:1.5px;background:#777"></div>
<div class="abs" style="left:543px;top:108.5px;width:1.5px;height:1.5px;background:#777"></div>
<div class="abs" style="left:546px;top:108.5px;width:1.5px;height:1.5px;background:#777"></div>
<div class="abs" style="left:549px;top:108.5px;width:1.5px;height:1.5px;background:#777"></div>
<div class="abs" style="left:560px;top:108.5px;width:1.5px;height:1.5px;background:#777"></div>
<div class="abs" style="left:564px;top:108.5px;width:1.5px;height:1.5px;background:#777"></div>
<div class="abs" style="left:568px;top:108.5px;width:1.5px;height:1.5px;background:#777"></div>
<div class="abs" style="left:572px;top:108.5px;width:1.5px;height:1.5px;background:#777"></div>
<div class="abs" style="left:543px;top:109px;width:2px;height:1px;background:#999"></div>
<div class="abs" style="left:540px;top:114px;width:15px;height:55px;background:#2b2b2b"></div>
<div class="abs" style="left:570px;top:123px;width:23px;height:21.5px;background:#2e2e2e;border:0.6px solid #555;border-radius:1px"></div>
<div class="abs" style="left:571px;top:124px;width:2px;height:2px;background:#ccc;border-radius:50%"></div>
<div class="abs" style="left:574px;top:124.5px;width:14px;height:1px;background:#999"></div>
<div class="abs" style="left:573px;top:129.0px;width:1.2px;height:1.2px;background:#888"></div>
<div class="abs" style="left:575.5px;top:129.0px;width:7px;height:1px;background:#777"></div>
<div class="abs" style="left:573px;top:132.3px;width:1.2px;height:1.2px;background:#888"></div>
<div class="abs" style="left:575.5px;top:132.3px;width:9px;height:1px;background:#777"></div>
<div class="abs" style="left:573px;top:135.6px;width:1.2px;height:1.2px;background:#888"></div>
<div class="abs" style="left:575.5px;top:135.6px;width:6px;height:1px;background:#777"></div>
<div class="abs" style="left:571px;top:127px;width:8px;height:0.8px;background:#777"></div>
<div class="abs" style="left:578px;top:140px;width:7px;height:2.5px;background:#555;border:0.5px solid #888"></div>
<div class="abs" style="left:586px;top:140px;width:6px;height:2.5px;background:#444"></div>
<div class="abs" style="left:14.800000000000011px;top:235px;width:34px;height:60px;background:#242424"></div>
<div class="abs" style="left:16.80000000000001px;top:253.3px;width:3.4px;height:3.4px;border-radius:50%;background:#c8c8c8"></div>
<div class="abs" style="left:22px;top:254.5px;width:4px;height:1px;background:#6a6a6a"></div>
<div class="abs" style="left:16.80000000000001px;top:258.7px;width:3.4px;height:3.4px;border-radius:50%;background:#c8c8c8"></div>
<div class="abs" style="left:22px;top:259.9px;width:5px;height:1px;background:#6a6a6a"></div>
<div class="abs" style="left:16.80000000000001px;top:264.1px;width:3.4px;height:3.4px;border-radius:50%;background:#c8c8c8"></div>
<div class="abs" style="left:22px;top:265.3px;width:3px;height:1px;background:#6a6a6a"></div>
<div class="abs" style="left:16.80000000000001px;top:269.5px;width:3.4px;height:3.4px;border-radius:50%;background:#c8c8c8"></div>
<div class="abs" style="left:22px;top:270.7px;width:4px;height:1px;background:#6a6a6a"></div>
<div class="abs" style="left:16.80000000000001px;top:274.9px;width:3.4px;height:3.4px;border-radius:50%;background:#c8c8c8"></div>
<div class="abs" style="left:22px;top:276.1px;width:2px;height:1px;background:#6a6a6a"></div>
<div class="abs" style="left:16.80000000000001px;top:280.3px;width:3.4px;height:3.4px;border-radius:50%;background:#c8c8c8"></div>
<div class="abs" style="left:22px;top:281.5px;width:4px;height:1px;background:#6a6a6a"></div>
<div class="abs" style="left:16.80000000000001px;top:285.7px;width:3.4px;height:3.4px;border-radius:50%;background:#c8c8c8"></div>
<div class="abs" style="left:22px;top:286.9px;width:5px;height:1px;background:#6a6a6a"></div>
<div class="abs" style="left:16.80000000000001px;top:291.1px;width:3.4px;height:3.4px;border-radius:50%;background:#c8c8c8"></div>
<div class="abs" style="left:22px;top:292.3px;width:4px;height:1px;background:#6a6a6a"></div>
<div class="t" style="left:16.5px;top:237.5px;font-size:2.5px;color:#888">Material<br>Nodes</div>
<div class="abs" style="left:19px;top:243px;width:3.4px;height:3.4px;border-radius:50%;background:#d8d8d8"></div>
<div class="abs" style="left:27.5px;top:241px;width:9px;height:9px;background:#333;border-radius:1px"></div>
<div class="abs" style="left:30.5px;top:243px;width:3px;height:3px;border:0.6px solid #999;border-radius:50%"></div>
<div class="abs" style="left:41px;top:243.5px;width:3.4px;height:3.4px;border-radius:50%;background:#eee"></div>
<div class="abs" style="left:45.5px;top:237px;width:1px;height:1.5px;background:#aaa"></div>
<div class="abs" style="left:49.400000000000006px;top:235.3px;width:70.6px;height:59.7px;overflow:hidden;background:linear-gradient(160deg,#cdcdcd 0%,#c3c3c3 45%,#b9b9b9 100%)">
<svg width="71" height="60" viewBox="0 0 71 60" style="position:absolute;left:0;top:0">
<path d="M36 2 L71 2 L71 18 L62 20 L58 9 Z" fill="#d9d9d9"/><path d="M62 20 L71 18 L71 60 L64 60 Z" fill="#b2b2b2" opacity="0.6"/>
<path d="M28 6 L30.5 12 L35 11 L37 14 C42 15 46.5 17 47.5 20 L52 19 L49 24 C51 30 50.5 36 48.5 40 C46 45 41 49 36 50 C32 53 24 54 19 51.5 C14 49.5 12 45 12.5 41 C9.5 37.5 7 34 7.5 31 L5 29 L9 26.5 C8.5 24 7 22 5.5 20 C8.5 17.5 12.5 16.5 16.5 15.5 L18.5 10 L22 13.5 L24 8.5 Z" fill="#c48a4e"/>
<path d="M14 18 C18 16 24 16 28 19 C26 21 20 22 14 22 Z" fill="#dcaa6c" opacity="0.8"/>
<path d="M31 22 C36 20 41 21 45 25 C43 28 39 29 34 27 Z" fill="#d8a264" opacity="0.7"/>
<path d="M27 29 L33 27 L32 38 L28 40 Z" fill="#eec088" opacity="0.9"/>
<path d="M37 30 C40 28 43 30 44 34 L40 38 Z" fill="#e2b070" opacity="0.6"/>
<path d="M36 40 C40 38 45 38 47 41 C44 46 40 48 36 48 Z" fill="#a06a36" opacity="0.8"/>
<path d="M16 41 C20 45 26 47 32 47 C28 51 20 51 16 47 Z" fill="#a46c38" opacity="0.8"/>
<g fill="#f0d0a0" opacity="0.7"><circle cx="20" cy="30" r="0.7"/><circle cx="24" cy="36" r="0.6"/><circle cx="38" cy="18" r="0.7"/><circle cx="44" cy="30" r="0.6"/><circle cx="22" cy="44" r="0.6"/><circle cx="40" cy="44" r="0.5"/><circle cx="30" cy="14" r="0.6"/><circle cx="12" cy="26" r="0.6"/></g>
<rect x="11" y="55" width="17" height="4" rx="0.5" fill="#333"/><rect x="54" y="55" width="15" height="4" rx="0.5" fill="#333"/><g fill="#999"><rect x="13" y="56.3" width="2" height="1.4"/><rect x="19" y="56.3" width="1.5" height="1.4"/><rect x="24" y="56.3" width="2" height="1.4"/><rect x="57" y="56.3" width="3" height="1.4"/><rect x="64" y="56.3" width="3" height="1.4"/></g>
<rect x="66" y="1" width="4" height="3" fill="#444" opacity="0.6"/>
</svg></div>
<div class="t" style="left:13.800000000000011px;top:311px;font-size:5.8px;color:#e0e0e0">FX_Material Showroom</div>
<div class="t" style="left:13.800000000000011px;top:322.5px;font-size:4.6px;color:#a8a8a8">Tags: <span style="color:#4a9a70;background:#1f2a24;padding:0 1px">demo</span>&nbsp; <span style="color:#4a9a70;background:#1f2a24;padding:0 1px">quick</span></div>
</div>
<div class="abs" id="w3" style="left:335px;top:364px;width:515px;height:344px;background:#262626;overflow:hidden;box-shadow:-1px 0 0 #151515">
<div class="abs" style="left:0;top:0;width:515px;height:16px;background:#222222"></div>
<div class="t" style="left:2.3000000000000114px;top:2px;font-size:8.8px;color:#dcdcdc">Timeline</div>
<div class="abs" style="left:0;top:16px;width:515px;height:1px;background:#303030"></div>
<div class="abs" style="left:0;top:17px;width:515px;height:20px;background:#272727"></div>
<svg class="abs" style="left:0;top:16px" width="110" height="21" viewBox="335 380 110 21"><g fill="none" stroke-width="1.25">
<path d="M346.5 387.5 L343.5 391.5 L346.5 395.5" stroke="#8f9a5a"/>
<path d="M365.5 387.5 L368.5 391.5 L365.5 395.5" stroke="#bdbdbd"/>
<circle cx="388.5" cy="390.5" r="3.2" stroke="#bdbdbd"/><path d="M386.2 393 L383.5 396" stroke="#bdbdbd"/>
<path d="M403 387.5 H415" stroke="#bdbdbd" stroke-dasharray="1.5 1.5"/><path d="M409 389 L413.5 393 L411 393.5 L410.5 396 Z" stroke="#bdbdbd"/>
<path d="M426.5 387.5 L435 390.5 L431 392 L430 396 Z" stroke="#bdbdbd"/>
</g></svg>
<div class="t" style="left:127.2px;top:25.19999999999999px;font-size:5.6px;color:#d4d4d4">537 ms</div>
<div class="abs" style="left:124.0px;top:17px;width:1px;height:20px;background:#2e2e2e"></div>
<div class="t" style="left:176.6px;top:25.19999999999999px;font-size:5.6px;color:#d4d4d4">570 ms</div>
<div class="abs" style="left:173.4px;top:17px;width:1px;height:20px;background:#2e2e2e"></div>
<div class="t" style="left:226.1px;top:25.19999999999999px;font-size:5.6px;color:#d4d4d4">604 ms</div>
<div class="abs" style="left:222.9px;top:17px;width:1px;height:20px;background:#2e2e2e"></div>
<div class="t" style="left:275.5px;top:25.19999999999999px;font-size:5.6px;color:#d4d4d4">638 ms</div>
<div class="abs" style="left:272.3px;top:17px;width:1px;height:20px;background:#2e2e2e"></div>
<div class="t" style="left:324.9px;top:25.19999999999999px;font-size:5.6px;color:#d4d4d4">671 ms</div>
<div class="abs" style="left:321.7px;top:17px;width:1px;height:20px;background:#2e2e2e"></div>
<div class="t" style="left:374.4px;top:25.19999999999999px;font-size:5.6px;color:#d4d4d4">705 ms</div>
<div class="abs" style="left:371.1px;top:17px;width:1px;height:20px;background:#2e2e2e"></div>
<div class="t" style="left:423.8px;top:25.19999999999999px;font-size:5.6px;color:#d4d4d4">738 ms</div>
<div class="abs" style="left:420.6px;top:17px;width:1px;height:20px;background:#2e2e2e"></div>
<div class="t" style="left:473.2px;top:25.19999999999999px;font-size:5.6px;color:#d4d4d4">772 ms</div>
<div class="abs" style="left:470.0px;top:17px;width:1px;height:20px;background:#2e2e2e"></div>
<div class="abs" style="left:0;top:37px;width:106px;height:320px;background:#262626"></div>
<div class="abs" style="left:106px;top:37px;width:1px;height:320px;background:#2e2e2e"></div>
<div class="abs" style="left:107px;top:37px;width:408px;height:320px;background:#1f1f1f"></div>
<div class="abs" style="left:107px;top:37px;width:408px;height:45px;background:#212121"></div>
<div class="abs" style="left:107px;top:82px;width:408px;height:23px;background:#1d1d1d"></div>
<div class="abs" style="left:107px;top:106px;width:408px;height:19px;background:#262626"></div>
<div class="abs" style="left:107px;top:125px;width:408px;height:22px;background:#1f1f1f"></div>
<div class="abs" style="left:107px;top:147px;width:408px;height:20px;background:#262626"></div>
<div class="abs" style="left:107px;top:167px;width:408px;height:25px;background:#1f1f1f"></div>
<div class="abs" style="left:107px;top:192px;width:408px;height:22px;background:#262626"></div>
<div class="abs" style="left:107px;top:215px;width:408px;height:66px;background:#1f1f1f"></div>
<div class="abs" style="left:107px;top:259px;width:408px;height:8px;background:#1b1b1b"></div>
<div class="abs" style="left:107px;top:281px;width:408px;height:20px;background:#262626"></div>
<div class="abs" style="left:107px;top:301px;width:408px;height:23px;background:#1f1f1f"></div>
<div class="abs" style="left:107px;top:324px;width:408px;height:22px;background:#262626"></div>
<div class="abs" style="left:106.7px;top:37px;width:1px;height:320px;background:#333"></div><div class="abs" style="left:116.6px;top:37px;width:1px;height:320px;background:#333"></div><div class="abs" style="left:126.5px;top:37px;width:1px;height:320px;background:#333"></div><div class="abs" style="left:136.4px;top:37px;width:1px;height:320px;background:#333"></div><div class="abs" style="left:146.3px;top:37px;width:1px;height:320px;background:#333"></div><div class="abs" style="left:156.2px;top:37px;width:1px;height:320px;background:#333"></div><div class="abs" style="left:166.0px;top:37px;width:1px;height:320px;background:#333"></div><div class="abs" style="left:175.9px;top:37px;width:1px;height:320px;background:#333"></div><div class="abs" style="left:185.8px;top:37px;width:1px;height:320px;background:#333"></div><div class="abs" style="left:195.7px;top:37px;width:1px;height:320px;background:#333"></div><div class="abs" style="left:205.6px;top:37px;width:1px;height:320px;background:#333"></div><div class="abs" style="left:215.5px;top:37px;width:1px;height:320px;background:#333"></div><div class="abs" style="left:225.4px;top:37px;width:1px;height:320px;background:#333"></div><div class="abs" style="left:235.2px;top:37px;width:1px;height:320px;background:#333"></div><div class="abs" style="left:245.1px;top:37px;width:1px;height:320px;background:#333"></div><div class="abs" style="left:255.0px;top:37px;width:1px;height:320px;background:#333"></div><div class="abs" style="left:264.9px;top:37px;width:1px;height:320px;background:#333"></div><div class="abs" style="left:274.8px;top:37px;width:1px;height:320px;background:#333"></div><div class="abs" style="left:284.7px;top:37px;width:1px;height:320px;background:#333"></div><div class="abs" style="left:294.6px;top:37px;width:1px;height:320px;background:#333"></div><div class="abs" style="left:304.4px;top:37px;width:1px;height:320px;background:#333"></div><div class="abs" style="left:314.3px;top:37px;width:1px;height:320px;background:#333"></div><div class="abs" style="left:324.2px;top:37px;width:1px;height:320px;background:#333"></div><div class="abs" style="left:334.1px;top:37px;width:1px;height:320px;background:#333"></div><div class="abs" style="left:344.0px;top:37px;width:1px;height:320px;background:#333"></div><div class="abs" style="left:353.9px;top:37px;width:1px;height:320px;background:#333"></div><div class="abs" style="left:363.8px;top:37px;width:1px;height:320px;background:#333"></div><div class="abs" style="left:373.6px;top:37px;width:1px;height:320px;background:#333"></div><div class="abs" style="left:383.5px;top:37px;width:1px;height:320px;background:#333"></div><div class="abs" style="left:393.4px;top:37px;width:1px;height:320px;background:#333"></div><div class="abs" style="left:403.3px;top:37px;width:1px;height:320px;background:#333"></div><div class="abs" style="left:413.2px;top:37px;width:1px;height:320px;background:#333"></div><div class="abs" style="left:423.1px;top:37px;width:1px;height:320px;background:#333"></div><div class="abs" style="left:433.0px;top:37px;width:1px;height:320px;background:#333"></div><div class="abs" style="left:442.9px;top:37px;width:1px;height:320px;background:#333"></div><div class="abs" style="left:452.7px;top:37px;width:1px;height:320px;background:#333"></div><div class="abs" style="left:462.6px;top:37px;width:1px;height:320px;background:#333"></div><div class="abs" style="left:472.5px;top:37px;width:1px;height:320px;background:#333"></div><div class="abs" style="left:482.4px;top:37px;width:1px;height:320px;background:#333"></div><div class="abs" style="left:492.3px;top:37px;width:1px;height:320px;background:#333"></div><div class="abs" style="left:502.2px;top:37px;width:1px;height:320px;background:#333"></div><div class="abs" style="left:512.1px;top:37px;width:1px;height:320px;background:#333"></div>
<div class="abs" style="left:0;top:105.0px;width:515px;height:1px;background:#323232"></div>
<div class="abs" style="left:0;top:214.0px;width:515px;height:1px;background:#323232"></div>
<div class="abs" style="left:0;top:281.0px;width:515px;height:1px;background:#323232"></div>
<div class="abs" style="left:0;top:324.0px;width:515px;height:1px;background:#323232"></div>
<div class="t" style="left:2.6000000000000227px;top:45.6px;font-size:9px;letter-spacing:-0.35px;color:#dadada;-webkit-text-stroke:0.15px">Pixmap Cache</div>
<svg class="abs" style="left:89.5px;top:44.3px" width="11" height="11"><g fill="none" stroke="#bdbdbd" stroke-width="0.9"><rect x="0.5" y="0.5" width="10" height="10" rx="1.2"/><path d="M0.5 3.5 H10.5 M5.5 5 V9 M3.5 7 H7.5"/></g></svg>
<div class="t" style="left:2.6000000000000227px;top:111.8px;font-size:9px;letter-spacing:-0.35px;color:#dadada;-webkit-text-stroke:0.15px">Scene Graph</div>
<svg class="abs" style="left:89.5px;top:110.5px" width="11" height="11"><g fill="none" stroke="#bdbdbd" stroke-width="0.9"><rect x="0.5" y="0.5" width="10" height="10" rx="1.2"/><path d="M0.5 3.5 H10.5 M5.5 5 V9 M3.5 7 H7.5"/></g></svg>
<div class="t" style="left:2.6000000000000227px;top:221.8px;font-size:9px;letter-spacing:-0.35px;color:#dadada;-webkit-text-stroke:0.15px">Memory Usage</div>
<svg class="abs" style="left:89.5px;top:220.5px" width="11" height="11"><g fill="none" stroke="#bdbdbd" stroke-width="0.9"><rect x="0.5" y="0.5" width="10" height="10" rx="1.2"/><path d="M0.5 3.5 H10.5 M5.5 5 V9 M3.5 7 H7.5"/></g></svg>
<div class="t" style="left:2.6000000000000227px;top:287.6px;font-size:9px;letter-spacing:-0.35px;color:#dadada;-webkit-text-stroke:0.15px">Input Events</div>
<svg class="abs" style="left:89.5px;top:286.3px" width="11" height="11"><g fill="none" stroke="#bdbdbd" stroke-width="0.9"><rect x="0.5" y="0.5" width="10" height="10" rx="1.2"/><path d="M0.5 3.5 H10.5 M5.5 5 V9 M3.5 7 H7.5"/></g></svg>
<div class="t" style="left:2.6000000000000227px;top:331.4px;font-size:9px;letter-spacing:-0.35px;color:#dadada;-webkit-text-stroke:0.15px">Animations</div>
<svg class="abs" style="left:89.5px;top:330.1px" width="11" height="11"><g fill="none" stroke="#bdbdbd" stroke-width="0.9"><rect x="0.5" y="0.5" width="10" height="10" rx="1.2"/><path d="M0.5 3.5 H10.5 M5.5 5 V9 M3.5 7 H7.5"/></g></svg>
<div class="abs" style="left:232.9px;top:82.3px;width:18.0px;height:22.2px;background:#e3a66e"></div>
<div class="abs" style="left:250.5px;top:82.3px;width:6.9px;height:22.2px;background:#e6cf7a"></div>
<div class="abs" style="left:261.0px;top:82.3px;width:5.3px;height:22.2px;background:#6fc792"></div>
<div class="abs" style="left:266.5px;top:82.3px;width:4.7px;height:22.2px;background:#8ab4ea"></div>
<div class="abs" style="left:292.0px;top:82.3px;width:4.2px;height:22.2px;background:#8a86d6"></div>
<div class="abs" style="left:295.8px;top:82.3px;width:6.2px;height:22.2px;background:#e594a6"></div>
<div class="abs" style="left:301.6px;top:82.3px;width:4.2px;height:22.2px;background:#eab373"></div>
<div class="abs" style="left:307.4px;top:82.3px;width:4.0px;height:22.2px;background:#86c991"></div>
<div class="abs" style="left:322.0px;top:82.3px;width:5.4px;height:22.2px;background:#70c79a"></div>
<div class="abs" style="left:333.7px;top:82.3px;width:3.7px;height:22.2px;background:#a3d9e3"></div>
<div class="abs" style="left:337.0px;top:82.3px;width:5.4px;height:22.2px;background:#8b8be3"></div>
<div class="abs" style="left:342.0px;top:82.3px;width:12.7px;height:22.2px;background:#a184e1"></div>
<svg class="abs" style="left:0;top:0" width="515" height="344" viewBox="335 364 515 344"><path d="M586.4 446.6 L587.5 444.6 L601 443.2 L626 441.5 L645 440.6 L659 439.5 L668 438.3 L673 436.5 L677 436.5 L677 434.6 L681 434.2 L681 432 L684 431.6 L684 429.5 L686.5 429 L686.5 427 L689 426.8 L689.4 425 L850 425 L850 446.7 Z" fill="#7373dc"/>
<path d="M787 490.5 H850 V512.3 H787 Z" fill="#e3ca6c"/>
<path d="M441.5 610 H526 V607.6 H850 V622.5 H441.5 Z" fill="#e57a73"/>
<path d="M441.5 632.4 H520 V631.6 H850 V644.4 H441.5 Z" fill="#e4c96b"/>
</svg>
</div>
</div></body></html>
